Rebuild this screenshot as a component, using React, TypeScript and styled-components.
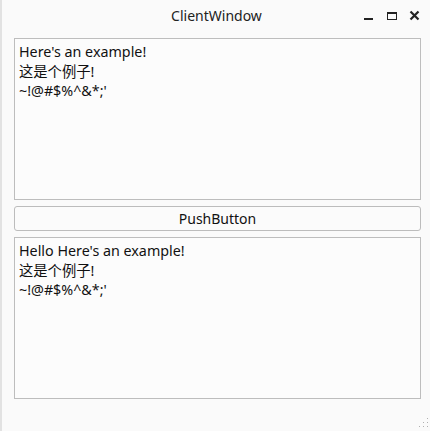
import React from "react";
import styled, { createGlobalStyle } from "styled-components";

const Global = createGlobalStyle`
  html, body { margin: 0; padding: 0; background: #fafafa; }
  body { font-family: "Noto Sans", "Noto Sans CJK SC", sans-serif; }
`;

const Window = styled.div`
  width: 430px;
  height: 431px;
  display: flex;
  flex-direction: column;
  background: #fafafa;
  border-left: 2px solid #e2e2e2;
  box-sizing: border-box;
  position: relative;
`;

const TitleBar = styled.div`
  height: 31px;
  display: grid;
  grid-template-columns: 1fr auto 1fr;
  align-items: center;
  padding: 0 9px 0 10px;
`;

const Title = styled.div`
  grid-column: 2;
  font-size: 14px;
  color: #222;
`;

const Controls = styled.div`
  grid-column: 3;
  justify-self: end;
  display: flex;
  gap: 11px;
  align-items: center;
  margin-top: 1px;
`;

const Icon = styled.svg`
  width: 12px;
  height: 12px;
  display: block;
`;

const Content = styled.div`
  flex: 1;
  display: flex;
  flex-direction: column;
  gap: 6px;
  padding: 7px 9px 32px 12px;
`;

const TextBox = styled.div`
  height: 162px;
  box-sizing: border-box;
  border: 1px solid #bdbdbd;
  background: #fcfcfc;
  padding: 3px 4px;
  font-size: 14.3px;
  line-height: 19.5px;
  color: #111;
`;

const Line = styled.div`
  white-space: nowrap;
`;

const Button = styled.button`
  height: 25px;
  box-sizing: border-box;
  border: 1px solid #bcbcbc;
  border-radius: 3px;
  background: #fbfbfb;
  font-family: "Noto Sans", sans-serif;
  font-size: 14px;
  color: #111;
  padding: 0;
`;

const Grip = styled.svg`
  position: absolute;
  right: 1px;
  bottom: 3px;
  width: 11px;
  height: 11px;
`;

const lines = ["Here's an example!", "这是个例子!", "~!@#$%^&*;'"];

const gripDots = [
  [9, 1],
  [9, 5],
  [5, 5],
  [9, 9],
  [5, 9],
  [1, 9],
];

export default function App() {
  return (
    <>
      <Global />
      <Window>
        <TitleBar>
          <Title>ClientWindow</Title>
          <Controls>
            <Icon viewBox="0 0 12 12">
              <rect x="1" y="8" width="9" height="2" fill="#222" />
            </Icon>
            <Icon viewBox="0 0 12 12">
              <rect x="1.5" y="2.5" width="9" height="7" fill="none" stroke="#222" strokeWidth="1" />
              <rect x="1" y="2" width="10" height="2" fill="#222" />
            </Icon>
            <Icon viewBox="0 0 12 12">
              <path d="M1.5 1.5 L9.5 9.5 M9.5 1.5 L1.5 9.5" stroke="#222" strokeWidth="2.2" />
            </Icon>
          </Controls>
        </TitleBar>
        <Content>
          <TextBox>
            {lines.map((l) => (
              <Line key={l}>{l}</Line>
            ))}
          </TextBox>
          <Button>PushButton</Button>
          <TextBox>
            {lines.map((l, i) => (
              <Line key={l}>{i === 0 ? "Hello " + l : l}</Line>
            ))}
          </TextBox>
        </Content>
        <Grip viewBox="0 0 11 11">
          {gripDots.map(([x, y]) => (
            <rect key={`${x}-${y}`} x={x} y={y} width="1" height="1" fill="#b0b0b0" />
          ))}
        </Grip>
      </Window>
    </>
  );
}
